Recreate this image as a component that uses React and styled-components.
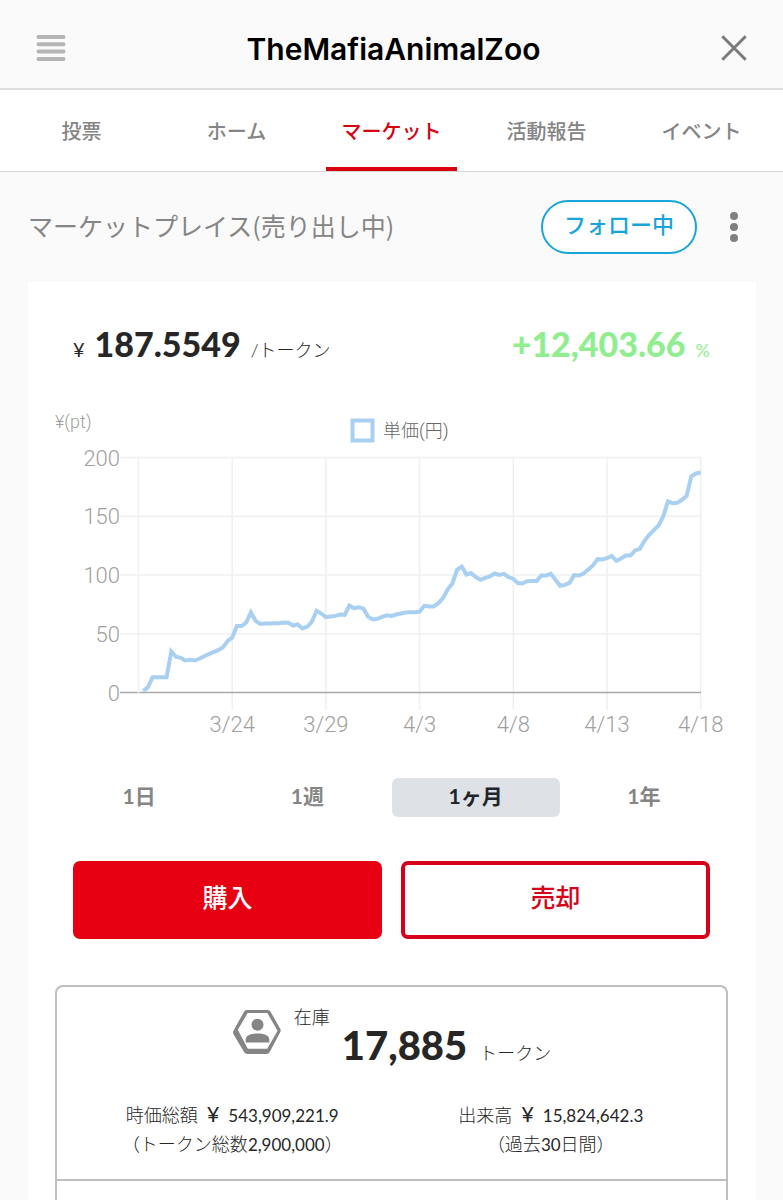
import React, { useState } from 'react';
import styled, { createGlobalStyle } from 'styled-components';

const tabs = ['投票', 'ホーム', 'マーケット', '活動報告', 'イベント'];
const ranges = ['1日', '1週', '1ヶ月', '1年'];
const dates = ['3/24', '3/29', '4/3', '4/8', '4/13', '4/18'];
const levels = [50, 100, 150, 200];

// unit price, four samples a day
const prices = [
    1.4, 4.3, 13, 13, 13, 13, 34.9, 30.4, 29.5, 27.2, 27.8, 27.2, 28.7, 30.9, 32.6, 34.3, 36, 38.3, 43.7, 46.8,
    56.5, 56.5, 59.6, 68.1, 61, 58.4, 58.7, 58.7, 59, 59, 59.6, 59.3, 57, 57.9, 54.5, 55.9, 60.1, 69.5, 67.2, 64.1,
    64.7, 65.2, 66.4, 66.1, 74, 71.8, 72.6, 71.5, 64.4, 62.1, 62.7, 64.4, 65.8, 65.2, 66.4, 67.2, 68.1, 68.4, 68.4, 68.9,
    73.8, 73.2, 73.2, 76, 80.3, 87.7, 92.8, 104.4, 107.2, 100.4, 101.6, 98.2, 95.9, 97.6, 98.7, 101.3, 100.1, 101, 98.2, 96.7,
    93, 93, 94.8, 95, 95, 99.6, 99.6, 101, 95.9, 90.8, 91.6, 93.3, 99.9, 99.6, 101.3, 104.7, 108.1, 113.5, 113.2, 114.3,
    116.3, 112.1, 114, 116.6, 116.6, 120.9, 122.3, 129.1, 134.2, 138.2, 142.1, 149.8, 162.6, 161.1, 161.4, 164, 167.4, 184.1, 186.4, 187.2,
];

const xAt = (i) => 83.5 + i * 4.685;
const yAt = (v) => 282.5 - v * 1.175;

const PriceChart = () => {
    const points = prices.map((p, i) => `${xAt(i + 1)},${yAt(p)}`).join(' ');
    return (
        <ChartStyled viewBox="0 0 673 340" role="img" aria-label="単価(円)">
            <text x="0" y="18" className="unit">¥(pt)</text>
            <rect x="297.5" y="10.5" width="20" height="20" className="legend" />
            <text x="328" y="27" className="legend-text">単価(円)</text>
            {levels.map((v) => (
                <g key={v}>
                    <line x1="65" x2="646" y1={yAt(v)} y2={yAt(v)} className="grid" />
                    <text x="65" y={yAt(v) + 8} textAnchor="end">{v}</text>
                </g>
            ))}
            {dates.map((d, i) => (
                <g key={d}>
                    <line x1={xAt(20 * i + 20)} x2={xAt(20 * i + 20)} y1="47" y2="300" className="grid" />
                    <text x={xAt(20 * i + 20)} y="322" textAnchor="middle">{d}</text>
                </g>
            ))}
            <line x1="65" x2="646" y1={yAt(0)} y2={yAt(0)} className="zero" />
            <text x="65" y={yAt(0) + 8} textAnchor="end">0</text>
            <line x1={xAt(0)} x2={xAt(0)} y1="47" y2="284" className="grid" />
            <polyline points={points} className="price" />
        </ChartStyled>
    );
};

const TokenIcon = () => (
    <svg width="50" height="46" viewBox="0 0 50 46" aria-hidden="true">
        <path
            fill="#858585"
            fillRule="evenodd"
            d="M14.5 1H35.5Q37.5 1 38.6 2.8L48.2 19.8Q49.2 21.5 48.2 23.3L37.6 43.2Q36.6 45 34.6 45H15.4Q13.4 45 12.3 43.3L1.6 25.5Q.6 23.5 1.6 21.6L12 2.7Q13 1 14.5 1ZM15.7 4L5.8 20.8L15.8 39.8H35.2L45.6 21.8L35.3 4Z"
        />
        <circle cx="25.5" cy="15.7" r="6" fill="#858585" />
        <path d="M13.7 33.5V30.6C13.7 26.4 19 24.5 25.5 24.5S37.3 26.4 37.3 30.6V33.5Z" fill="#858585" />
    </svg>
);

const App = () => {
    const [tab, setTab] = useState('マーケット');
    const [range, setRange] = useState('1ヶ月');

    return (
        <PageStyled>
            <GlobalStyle />
            <HeaderStyled>
                <IconButton aria-label="メニュー">
                    <svg width="30" height="26" viewBox="0 0 30 26" stroke="#b5b5b5" strokeWidth="4" strokeLinecap="round">
                        <path d="M2.5 2H27.5M2.5 9.3H27.5M2.5 16.6H27.5M2.5 24H27.5" />
                    </svg>
                </IconButton>
                <h1>TheMafiaAnimalZoo</h1>
                <IconButton aria-label="閉じる">
                    <svg width="26" height="26" viewBox="0 0 26 26" stroke="#7b7b7b" strokeWidth="3">
                        <path d="M1.3 1.3L24.7 24.7M24.7 1.3L1.3 24.7" />
                    </svg>
                </IconButton>
            </HeaderStyled>

            <TabBar>
                {tabs.map((name) => (
                    <Tab key={name} $active={name === tab} onClick={() => setTab(name)}>{name}</Tab>
                ))}
            </TabBar>

            <TitleRow>
                <h2>マーケットプレイス(売り出し中)</h2>
                <FollowButton>フォロー中</FollowButton>
                <IconButton aria-label="その他">
                    <svg width="10" height="32" viewBox="0 0 10 32" fill="#808080">
                        <circle cx="5" cy="5" r="4" />
                        <circle cx="5" cy="16" r="4" />
                        <circle cx="5" cy="27" r="4" />
                    </svg>
                </IconButton>
            </TitleRow>

            <CardStyled>
                <PriceRow>
                    <p className="price"><span className="yen">¥</span><strong>187.5549</strong><span>/トークン</span></p>
                    <p className="change"><strong>+12,403.66</strong><span>%</span></p>
                </PriceRow>

                <PriceChart />

                <RangeRow>
                    {ranges.map((name) => (
                        <RangeButton key={name} $active={name === range} onClick={() => setRange(name)}>{name}</RangeButton>
                    ))}
                </RangeRow>

                <ActionRow>
                    <ActionButton $filled>購入</ActionButton>
                    <ActionButton>売却</ActionButton>
                </ActionRow>

                <StockStyled>
                    <div className="summary">
                        <div className="stock">
                            <TokenIcon />
                            <span className="label">在庫</span>
                            <strong>17,885</strong>
                            <span className="token">トークン</span>
                        </div>
                        <div className="totals">
                            <p>時価総額 <b>¥</b> <span>543,909,221.9</span><br />（トークン総数<span>2,900,000</span>）</p>
                            <p>出来高 <b>¥</b> <span>15,824,642.3</span><br />（過去<span>30</span>日間）</p>
                        </div>
                    </div>
                </StockStyled>
            </CardStyled>
        </PageStyled>
    );
};

export default App;

const GlobalStyle = createGlobalStyle`
    * {
        box-sizing: border-box;
    }
    body {
        margin: 0;
        background: #fafafa;
        font-family: Lato, "Noto Sans CJK JP", sans-serif;
        color: #262626;
    }
    h1, h2, p {
        margin: 0;
    }
    button {
        font-family: inherit;
        cursor: pointer;
    }
`;

const PageStyled = styled.div`
    min-height: 100vh;
    display: flex;
    flex-direction: column;
`;

const HeaderStyled = styled.header`
    display: flex;
    align-items: center;
    justify-content: space-between;
    height: 90px;
    padding: 8px 36px 0;
    border-bottom: 2px solid #dedede;
    h1{
        padding-top: 2px;
        font-family: Inter, sans-serif;
        font-size: 30px;
        font-weight: 600;
        line-height: 40px;
        color: #000;
    }
`;

const IconButton = styled.button`
    display: flex;
    padding: 0;
    border: 0;
    background: none;
`;

const TabBar = styled.nav`
    display: grid;
    grid-template-columns: repeat(5, 1fr);
    padding: 0 4px;
    background: #fff;
    border-bottom: 1px solid #d6d6d8;
`;

const Tab = styled.button`
    height: 81px;
    margin: 0 12px;
    padding: 4px 0 0;
    border: 0;
    border-bottom: 4px solid ${(props) => (props.$active ? '#d7000f' : 'transparent')};
    background: none;
    font-size: 20px;
    font-weight: 500;
    white-space: nowrap;
    color: ${(props) => (props.$active ? '#d7000f' : '#858585')};
`;

const TitleRow = styled.div`
    display: flex;
    align-items: center;
    padding: 28px 44px 28px 28px;
    h2{
        flex: 1;
        padding-bottom: 4px;
        font-family: "Noto Sans CJK JP", sans-serif;
        font-size: 25px;
        font-weight: 400;
        line-height: 36px;
        color: #858585;
    }
`;

const FollowButton = styled.button`
    width: 156px;
    height: 54px;
    margin-right: 32px;
    padding: 0 0 8px;
    border: 2px solid #18a5d9;
    border-radius: 27px;
    background: #fff;
    font-size: 22px;
    font-weight: 500;
    color: #18a5d9;
`;

const CardStyled = styled.main`
    flex: 1;
    display: flex;
    flex-direction: column;
    margin: 0 27px 0 28px;
    padding: 38px 28px 0 27px;
    background: #fff;
`;

const PriceRow = styled.div`
    display: flex;
    justify-content: space-between;
    padding: 0 18px;
    font-size: 18px;
    font-weight: 300;
    line-height: 48px;
    p{
        display: flex;
        align-items: baseline;
        gap: 10px;
    }
    .yen{
        font-weight: 400;
        font-size: 20px;
    }
    strong{
        font-size: 34px;
        font-weight: 900;
    }
    .change{
        font-weight: 400;
        color: #90ee90;
    }
`;

const ChartStyled = styled.svg`
    display: block;
    width: 100%;
    margin-top: 36px;
    overflow: visible;
    text{
        font-family: Roboto, "Noto Sans CJK JP", sans-serif;
        font-size: 22px;
        font-weight: 300;
        fill: #a0a0a0;
    }
    .unit{
        font-size: 18px;
    }
    .legend{
        fill: #fff;
        stroke: #a9d0f0;
        stroke-width: 4;
    }
    .legend-text{
        font-size: 18px;
        fill: #666;
    }
    .grid{
        stroke: #f0f0f0;
        stroke-width: 1.5;
    }
    .zero{
        stroke: #a8a8a8;
        stroke-width: 1.5;
    }
    .price{
        fill: none;
        stroke: #a9d0f0;
        stroke-width: 4;
    }
`;

const RangeRow = styled.div`
    display: grid;
    grid-template-columns: repeat(4, 1fr);
    margin-top: 28px;
`;

const RangeButton = styled.button`
    height: 39px;
    padding: 0 0 6px;
    border: 0;
    border-radius: 6px;
    background: ${(props) => (props.$active ? '#dee2e6' : 'none')};
    font-size: 21px;
    font-weight: 700;
    color: ${(props) => (props.$active ? '#212529' : '#858585')};
`;

const ActionRow = styled.div`
    display: grid;
    grid-template-columns: 1fr 1fr;
    gap: 19px;
    margin-top: 44px;
    padding: 0 18px;
`;

const ActionButton = styled.button`
    height: 78px;
    padding: 0 0 8px;
    border: 4px solid ${(props) => (props.$filled ? '#e60012' : '#d7001b')};
    border-radius: 7px;
    background: ${(props) => (props.$filled ? '#e60012' : '#fff')};
    font-size: 25px;
    font-weight: 500;
    color: ${(props) => (props.$filled ? '#fff' : '#d7001b')};
`;

const StockStyled = styled.section`
    flex: 1;
    margin-top: 46px;
    border: 2px solid #bfbfbf;
    border-bottom: 0;
    border-radius: 8px 8px 0 0;
    font-size: 18px;
    font-weight: 300;
    .summary{
        padding: 22px 16px 20px;
        border-bottom: 2px solid #bfbfbf;
    }
    .stock{
        display: flex;
        justify-content: center;
        align-items: flex-start;
        gap: 12px;
    }
    .label{
        line-height: 16px;
    }
    strong{
        font-size: 40px;
        font-weight: 900;
        line-height: 72px;
    }
    .token{
        line-height: 88px;
    }
    .totals{
        display: grid;
        grid-template-columns: 1fr 1fr;
        margin-top: 4px;
        text-align: center;
        line-height: 28px;
    }
    .totals span{
        font-size: 17px;
        font-weight: 400;
    }
    b{
        margin: 0 4px;
        font-size: 22px;
        font-weight: 400;
        line-height: 20px;
    }
`;
